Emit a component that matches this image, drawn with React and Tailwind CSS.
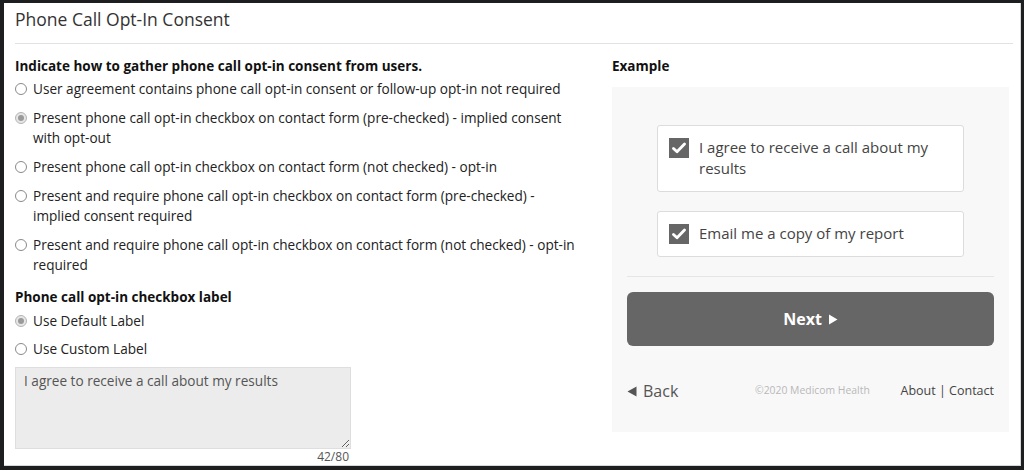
// ── Helpers ───────────────────────────────────────────────────────────────────

const FONT = { fontFamily: '"Open Sans", "Noto Sans", sans-serif' };

const Radio = ({ checked }) => (
  <span className={`mt-[4px] shrink-0 w-[12px] h-[12px] rounded-full border ${checked ? "border-[#b5b5b5] bg-[#e6e6e6]" : "border-[#8a8a8a] bg-white"} flex items-center justify-center`}>
    {checked && <span className="w-[6px] h-[6px] rounded-full bg-[#9a9a9a]" />}
  </span>
);

const Option = ({ checked, children }) => (
  <label className="flex items-start gap-[6px] text-[13.6px] leading-[20px] text-[#222]">
    <Radio checked={checked} />
    <span>{children}</span>
  </label>
);

const Check = () => (
  <span className="shrink-0 w-[20px] h-[20px] bg-[#666] flex items-center justify-center">
    <svg width="14" height="12" viewBox="0 0 14 12">
      <path d="M1.5 6.5 L5 9.8 L12.5 2" fill="none" stroke="#fff" strokeWidth="2.8" strokeLinecap="round" strokeLinejoin="round" />
    </svg>
  </span>
);

const CheckCard = ({ children }) => (
  <div className="bg-white border border-[#dcdcdc] rounded-[3px] px-[11px] py-[12px] flex items-start gap-[10px]">
    <Check />
    <span className="text-[15px] leading-[21px] text-[#444] -mt-[1px]">{children}</span>
  </div>
);

// ── App ───────────────────────────────────────────────────────────────────────

export default function App() {
  return (
    <div className="w-[1024px] h-[470px] bg-[#1c1e20] pt-[3px] pl-[4px] pr-[3px] pb-[4px]" style={FONT}>
      <div className="h-full bg-white border-r border-b border-[#d8d8d8] px-[11px]">
        <div className="h-[41px] flex items-center pb-[8px] text-[17.5px] text-[#333] border-b border-[#e2e2e2] mr-[-4px]">
          Phone Call Opt-In Consent
        </div>

        <div className="flex gap-[32px] pt-[12px]">
          {/* left column */}
          <div className="w-[565px]">
            <h3 className="text-[13.5px] font-bold text-[#111] leading-[20px] mb-[3px]">
              Indicate how to gather phone call opt-in consent from users.
            </h3>
            <div className="flex flex-col gap-[9px]">
              <Option>User agreement contains phone call opt-in consent or follow-up opt-in not required</Option>
              <Option checked>Present phone call opt-in checkbox on contact form (pre-checked) - implied consent with opt-out</Option>
              <Option>Present phone call opt-in checkbox on contact form (not checked) - opt-in</Option>
              <Option>Present and require phone call opt-in checkbox on contact form (pre-checked) - implied consent required</Option>
              <Option>Present and require phone call opt-in checkbox on contact form (not checked) - opt-in required</Option>
            </div>

            <h3 className="text-[13.5px] font-bold text-[#111] leading-[20px] mt-[12px] mb-[4px]">
              Phone call opt-in checkbox label
            </h3>
            <div className="flex flex-col gap-[8px]">
              <Option checked>Use Default Label</Option>
              <Option>Use Custom Label</Option>
            </div>
            <div className="w-[336px] mt-[8px]">
              <textarea
                disabled
                defaultValue="I agree to receive a call about my results"
                className="block w-full h-[82px] bg-[#ececec] border border-[#dedede] px-[8px] py-[3px] text-[13.6px] leading-[20px] text-[#555] resize"
                style={FONT}
              />
              <div className="text-right text-[12px] leading-[16px] text-[#555] pr-[2px]">42/80</div>
            </div>
          </div>

          {/* right column */}
          <div className="w-[397px]">
            <h3 className="text-[13.5px] font-bold text-[#111] leading-[20px] mb-[11px]">Example</h3>
            <div className="bg-[#f8f8f8] h-[345px] px-[15px] pt-[38px]">
              <div className="px-[30px] flex flex-col gap-[19px]">
                <CheckCard>I agree to receive a call about my results</CheckCard>
                <CheckCard>Email me a copy of my report</CheckCard>
              </div>
              <div className="h-px bg-[#e6e6e6] mt-[19px]" />
              <button className="mt-[15px] w-full h-[54px] bg-[#666] rounded-[6px] text-white text-[16px] font-bold flex items-center justify-center gap-[6px]" style={FONT}>
                Next
                <svg width="10" height="11" viewBox="0 0 10 11"><path d="M1 0.5 L9.5 5.5 L1 10.5 Z" fill="#fff" /></svg>
              </button>
              <div className="mt-[33px] flex items-center justify-between">
                <span className="flex items-center gap-[6px] text-[16px] text-[#555]">
                  <svg width="10" height="11" viewBox="0 0 10 11"><path d="M9.5 0.5 L0.5 5.5 L9.5 10.5 Z" fill="#555" /></svg>
                  Back
                </span>
                <span className="text-[10.4px] text-[#b8b8b8] ml-[46px]">©2020 Medicom Health</span>
                <span className="text-[12.5px] text-[#444]">About | Contact</span>
              </div>
            </div>
          </div>
        </div>
      </div>
    </div>
  );
}
